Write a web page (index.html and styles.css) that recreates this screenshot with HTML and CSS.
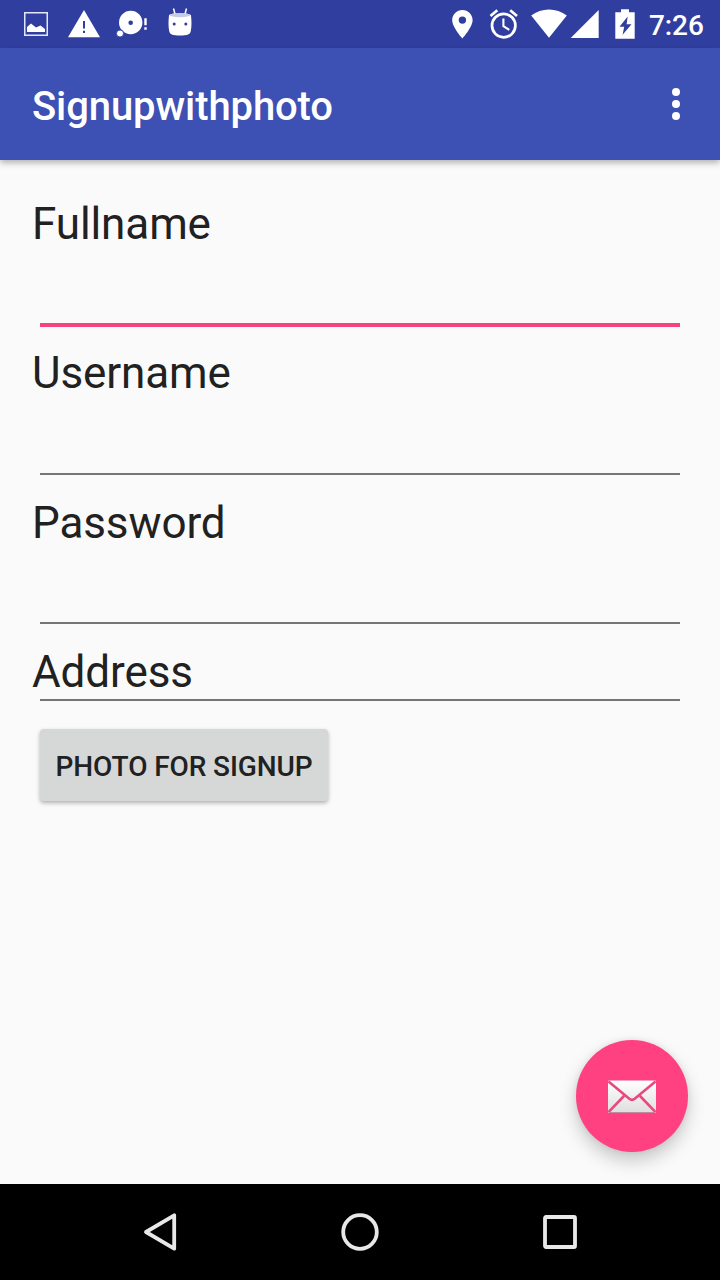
FILE: index.html
```html
<!DOCTYPE html>
<html lang="en">
<head>
<meta charset="utf-8">
<title>Signupwithphoto</title>
<link rel="stylesheet" href="styles.css">
</head>
<body>
<div class="screen">
  <div class="status-bar">
    <div class="status-group">
      <svg width="48" height="48" viewBox="0 0 48 48"><rect x="12.75" y="12.75" width="22.5" height="22.5" fill="none" stroke="#e4e7fa" stroke-width="1.5"/><path d="M15 32V27L19 23.5L24 27.5L28.5 25.5L33 29V32Z" fill="#fff"/></svg>
      <svg width="48" height="48" viewBox="0 0 48 48"><path d="M24 10L40 37.3H8Z" fill="#fff"/><path d="M23 21h2v7.500h-2zM23 30.800h2v2.200h-2z" fill="#303f9f"/></svg>
      <svg width="48" height="48" viewBox="0 0 48 48"><circle cx="22.700" cy="22.500" r="11.700" fill="#fff"/><circle cx="12" cy="33.500" r="3.600" fill="#fff" stroke="#303f9f" stroke-width="1"/><circle cx="22.700" cy="22.800" r="2.300" fill="#303f9f"/><path d="M36.300 18.200h2.400v7h-2.400zM36.300 27.300h2.400v2.400h-2.400z" fill="#fff"/></svg>
      <svg width="48" height="48" viewBox="0 0 48 48"><path d="M17.500 8.500L19 14M30.500 8.500L29 14" stroke="#fff" stroke-width="1.500"/><path d="M13 15.500C13 12.500 35 12.500 35 15.500C35.700 21 35.700 27 34.700 31.500C34 34.500 31 35.500 24 35.500S14 34.500 13.300 31.500C12.300 27 12.300 21 13 15.500Z" fill="#fff"/><ellipse cx="24" cy="15.200" rx="10.200" ry="2" fill="#c5cae9"/><circle cx="18.200" cy="24" r="1.500" fill="#303f9f"/><circle cx="29.800" cy="24" r="1.500" fill="#303f9f"/></svg>
    </div>
    <div class="status-group">
      <svg width="40" height="48" viewBox="442 0 40 48"><path fill-rule="evenodd" d="M462.400 10C456.700 10 452.200 14.500 452.200 20.100C452.200 27.600 462.400 38.500 462.400 38.500S472.600 27.600 472.600 20.100C472.600 14.500 468.100 10 462.400 10ZM462.400 16.400A3.700 3.700 0 1 1 462.400 23.800A3.700 3.700 0 0 1 462.400 16.400Z" fill="#fff"/></svg>
      <svg width="44" height="48" viewBox="482 0 44 48"><g fill="none" stroke="#fff"><circle cx="503.700" cy="25.600" r="11.700" stroke-width="2.700"/><path d="M503.400 18.500V26.200L509.300 29.800" stroke-width="2.100"/><path d="M490.500 16L497.300 10.300M510.200 10.300L517 16" stroke-width="2.700"/></g></svg>
      <svg width="43" height="48" viewBox="526 0 43 48"><path d="M531.200 15.500C541.500 7.500 556.500 7.500 566.800 15.500L549 37.700Z" fill="#fff"/></svg>
      <svg width="38" height="48" viewBox="569 0 38 48"><path d="M598.700 10V38H570.700Z" fill="#fff"/></svg>
      <svg width="34" height="48" viewBox="607 0 34 48"><path d="M621 9.300H629V12.200H634.700V38.700H615.300V12.200H621Z" fill="#fff"/><path d="M627.700 16.500L619.500 26.800H624.200L622.600 34.800L631.500 24.200H626.600Z" fill="#303f9f"/></svg>
      <span class="clock">7:26</span>
    </div>
  </div>

  <header class="app-bar">
    <h1 class="app-title">Signupwithphoto</h1>
    <svg width="24" height="48" viewBox="0 0 24 48" fill="#fff"><circle cx="12" cy="12" r="4"/><circle cx="12" cy="24" r="4"/><circle cx="12" cy="36" r="4"/></svg>
  </header>

  <main class="form">
    <div class="field"><span class="label">Fullname</span><div class="line focused"></div></div>
    <div class="field"><span class="label">Username</span><div class="line"></div></div>
    <div class="field"><span class="label">Password</span><div class="line"></div></div>
    <div class="field last"><span class="label">Address</span><div class="line"></div></div>
    <button class="photo-button">PHOTO FOR SIGNUP</button>
    <button class="fab" aria-label="Send email">
      <svg width="48" height="34" viewBox="0 0 48 34">
        <defs><linearGradient id="paper" x1="0" y1="0" x2="0" y2="1"><stop offset="0" stop-color="#fff"/><stop offset="1" stop-color="#dedede"/></linearGradient></defs>
        <rect y="0.500" width="48" height="32.500" rx="1" fill="url(#paper)"/>
        <path d="M2 32.700H46" stroke="#b77b8c" stroke-width="1"/>
        <path d="M0.500 1.500L21 18.600Q24 21 27 18.600L47.500 1.500M0.500 32L16 16M47.500 32L32 16" fill="none" stroke="#e84a7f" stroke-width="2.600"/>
      </svg>
    </button>
  </main>

  <nav class="nav-bar">
    <svg width="48" height="48" viewBox="0 0 48 48"><path d="M38.200 7.300V40.700L10 24Z"/></svg>
    <svg width="48" height="48" viewBox="0 0 48 48"><circle cx="24" cy="24" r="16.800"/></svg>
    <svg width="48" height="48" viewBox="0 0 48 48"><rect x="9" y="9" width="30" height="30" rx="1"/></svg>
  </nav>
</div>
</body>
</html>
```
FILE: styles.css
```css
* { box-sizing: border-box; }
body { margin: 0; font-family: Roboto, "Noto Sans", sans-serif; }
svg { display: block; flex: none; }
button { border: 0; font-family: inherit; }

.screen { display: flex; flex-direction: column; width: 720px; height: 1280px; background: #fafafa; }

.status-bar { display: flex; justify-content: space-between; height: 48px; padding: 0 16px 0 12px; background: #303f9f; }
.status-group { display: flex; }
.clock { width: 63px; padding-left: 8px; color: #fff; font-size: 28px; font-weight: 500; line-height: 51px; letter-spacing: -.1px; white-space: nowrap; }

.app-bar { display: flex; z-index: 1; justify-content: space-between; align-items: center; height: 112px; padding: 0 32px; background: #3d50b3; box-shadow: 0 3px 6px rgba(0, 0, 0, .28); }
.app-title { margin: 5px 0 0; color: #fff; font-size: 40px; font-weight: 500; line-height: 48px; letter-spacing: -.1px; }

.form { display: flex; flex: 1; flex-direction: column; position: relative; padding: 38px 32px 0; }
.field { display: flex; flex-direction: column; justify-content: space-between; height: 149px; padding-bottom: 20px; }
.field:nth-child(2) { height: 150px; padding-bottom: 22px; }
.label { color: #212121; font-size: 44px; line-height: 52px; letter-spacing: -.1px; }
.line { height: 2px; margin: 0 8px; background: #757575; }
.line.focused { height: 4px; background: #f5437f; }
.field:nth-child(3) { padding-bottom: 22px; }
.field.last { height: 55px; padding: 0; }
.last .label { line-height: 53px; }
.photo-button { width: 288px; height: 72px; margin: 28px 8px 0; padding: 3px 0 0; border-radius: 4px; background: #d6d7d7; box-shadow: 0 2px 4px rgba(0, 0, 0, .3); color: #212121; font-size: 28px; font-weight: 500; letter-spacing: -.1px; white-space: nowrap; }

.fab { display: flex; position: absolute; right: 32px; bottom: 32px; align-items: center; justify-content: center; width: 112px; height: 112px; padding: 1px 0 0; border-radius: 50%; background: #ff4081; box-shadow: 0 9px 18px rgba(0, 0, 0, .2), 0 0 6px rgba(0, 0, 0, .08); }

.nav-bar { display: flex; z-index: 1; justify-content: space-between; align-items: center; height: 96px; padding: 0 136px; background: #000; }
.nav-bar svg { fill: none; stroke: #e8e8e8; stroke-width: 3.800; stroke-linejoin: round; }
```
